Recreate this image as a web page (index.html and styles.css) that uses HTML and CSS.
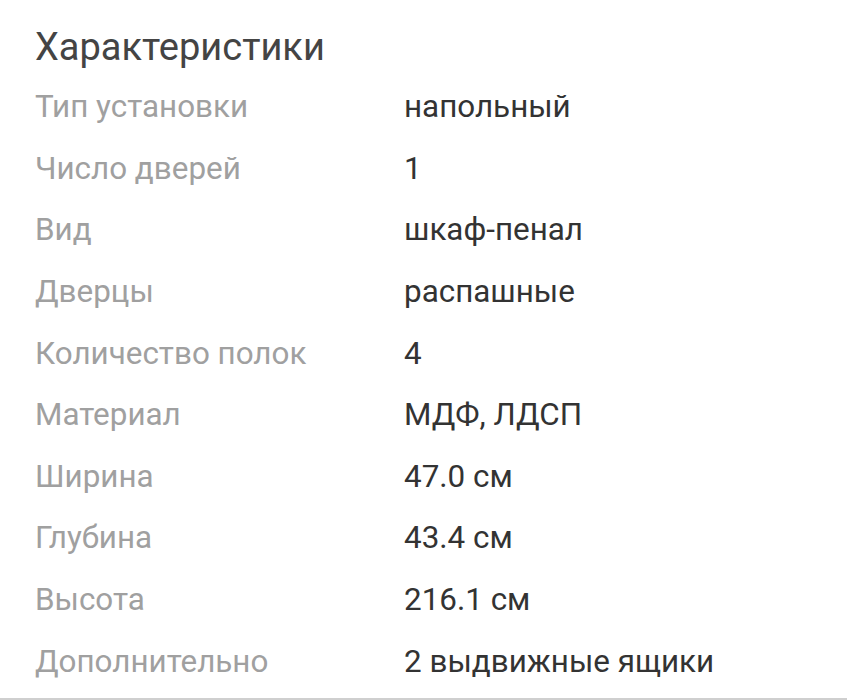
FILE: index.html
```html
<!DOCTYPE html>
<html lang="ru">
<head>
<meta charset="utf-8">
<link rel="stylesheet" href="styles.css">
</head>
<body>
<section class="specs">
  <h2 class="specs-title">Характеристики</h2>
  <dl class="specs-list">
    <div class="row"><dt>Тип установки</dt><dd>напольный</dd></div>
    <div class="row"><dt>Число дверей</dt><dd>1</dd></div>
    <div class="row"><dt>Вид</dt><dd>шкаф-пенал</dd></div>
    <div class="row"><dt>Дверцы</dt><dd>распашные</dd></div>
    <div class="row"><dt>Количество полок</dt><dd>4</dd></div>
    <div class="row"><dt>Материал</dt><dd>МДФ, ЛДСП</dd></div>
    <div class="row"><dt>Ширина</dt><dd>47.0 см</dd></div>
    <div class="row"><dt>Глубина</dt><dd>43.4 см</dd></div>
    <div class="row"><dt>Высота</dt><dd>216.1 см</dd></div>
    <div class="row"><dt>Дополнительно</dt><dd>2 выдвижные ящики</dd></div>
  </dl>
</section>
</body>
</html>
```
FILE: styles.css
```css
html, body {
  margin: 0;
  padding: 0;
  background: #fff;
}
body {
  font-family: Roboto, "Noto Sans", sans-serif;
  width: 847px;
  height: 700px;
  overflow: hidden;
}
.specs {
  padding: 18px 0 0 35px;
  border-bottom: 2px solid #cfcfcf;
  height: 680px;
}
.specs-title {
  margin: 0;
  font-size: 38px;
  font-weight: 400;
  line-height: 58px;
  color: #444;
}
.specs-list {
  margin: 0;
}
.row {
  display: flex;
  height: 61.6px;
  align-items: center;
  font-size: 31.4px;
}
.row dt {
  width: 369px;
  color: #a0a0a0;
}
.row dd {
  margin: 0;
  color: #333;
}
```
